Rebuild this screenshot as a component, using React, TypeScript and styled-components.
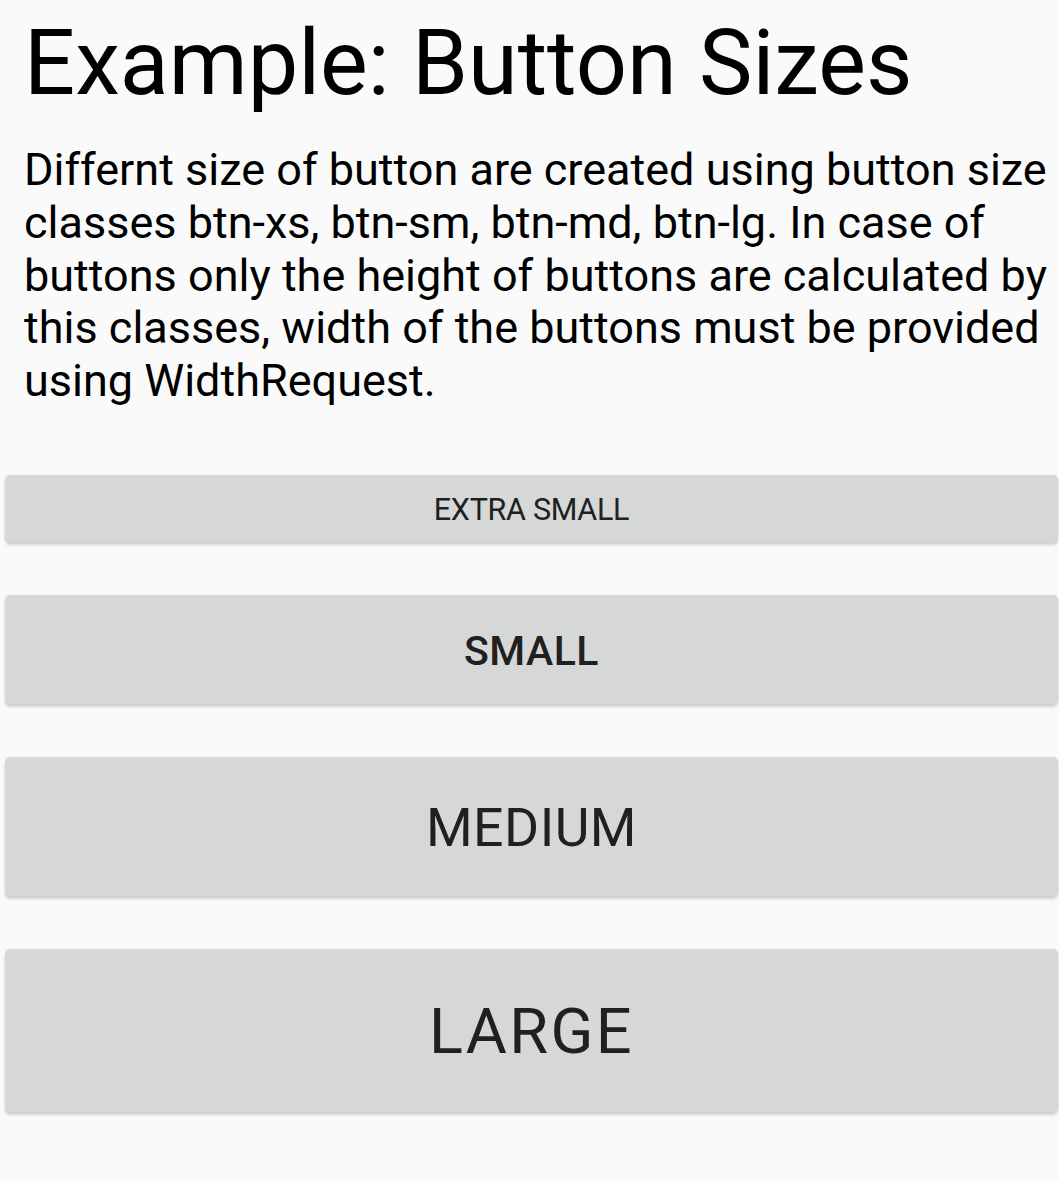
import React from "react";
import styled, { createGlobalStyle } from "styled-components";

const GlobalStyle = createGlobalStyle`
  html, body {
    margin: 0;
    padding: 0;
    background: #fafafa;
  }
  body {
    font-family: Roboto, "Noto Sans", sans-serif;
    color: #000;
  }
`;

const Page = styled.div`
  display: flex;
  flex-direction: column;
  padding-top: 10px;
  padding-bottom: 40px;
`;

const Content = styled.div`
  display: flex;
  flex-direction: column;
  padding: 0 8px 0 24px;
`;

const Title = styled.h1`
  margin: 0;
  font-family: Roboto, sans-serif;
  font-weight: 400;
  font-size: 90px;
  line-height: 107px;
  color: #000;
`;

const Description = styled.p`
  margin: 27px 0 0 0;
  font-family: Roboto, sans-serif;
  font-weight: 400;
  font-size: 45px;
  line-height: 52.8px;
  color: #000;
`;

const ButtonList = styled.div`
  display: flex;
  flex-direction: column;
  gap: 53px;
  margin: 67px 1px 0 5px;
`;

type Size = "xs" | "sm" | "md" | "lg";

const sizeMap: Record<Size, { h: number; f: number; w: number; ls: number }> = {
  xs: { h: 67, f: 30.5, w: 400, ls: -0.3 },
  sm: { h: 109, f: 41, w: 500, ls: 0.5 },
  md: { h: 139, f: 53.5, w: 400, ls: 0.5 },
  lg: { h: 163, f: 63, w: 400, ls: 2.4 },
};

const SizeButton = styled.button<{ $size: Size }>`
  display: flex;
  align-items: center;
  justify-content: center;
  height: ${(p) => sizeMap[p.$size].h}px;
  width: 100%;
  border: none;
  border-radius: 5px;
  background: #d6d7d7;
  box-shadow: 0 3px 3px rgba(0, 0, 0, 0.16), 0 0 2px rgba(0, 0, 0, 0.08);
  font-family: Roboto, sans-serif;
  font-size: ${(p) => sizeMap[p.$size].f}px;
  font-weight: ${(p) => sizeMap[p.$size].w};
  letter-spacing: ${(p) => sizeMap[p.$size].ls}px;
  color: #202020;
  text-transform: uppercase;
  padding: 3px 0 0 0;
  cursor: pointer;
`;

export default function App() {
  return (
    <>
      <GlobalStyle />
      <Page>
        <Content>
          <Title>Example: Button Sizes</Title>
          <Description>
            Differnt size of button are created using button size classes
            btn-xs, btn-sm, btn-md, btn-lg. In case of buttons only the height
            of buttons are calculated by this classes, width of the buttons
            must be provided using WidthRequest.
          </Description>
        </Content>
        <ButtonList>
          <SizeButton $size="xs">Extra Small</SizeButton>
          <SizeButton $size="sm">Small</SizeButton>
          <SizeButton $size="md">Medium</SizeButton>
          <SizeButton $size="lg">Large</SizeButton>
        </ButtonList>
      </Page>
    </>
  );
}
